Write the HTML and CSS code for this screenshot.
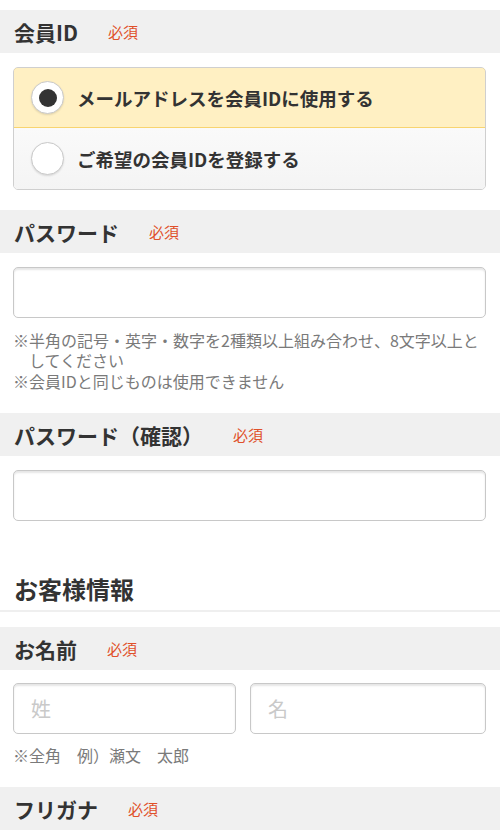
FILE: index.html
```html
<!DOCTYPE html>
<html lang="ja">
<head>
<meta charset="utf-8">
<title>会員登録</title>
<link rel="stylesheet" href="styles.css">
</head>
<body>
<div class="page">
  <div class="band"><span class="label">会員ID</span><span class="req">必須</span></div>
  <div class="body body-radio">
    <div class="radios">
      <label class="radio-row checked"><span class="radio"><span class="dot"></span></span><span class="rtext">メールアドレスを会員IDに使用する</span></label>
      <label class="radio-row"><span class="radio"></span><span class="rtext">ご希望の会員IDを登録する</span></label>
    </div>
  </div>

  <div class="band"><span class="label">パスワード</span><span class="req">必須</span></div>
  <div class="body body-pw">
    <div class="input"></div>
    <p class="note first">※半角の記号・英字・数字を2種類以上組み合わせ、8文字以上としてください</p>
    <p class="note">※会員IDと同じものは使用できません</p>
  </div>

  <div class="band"><span class="label">パスワード（確認）</span><span class="req">必須</span></div>
  <div class="body">
    <div class="input"></div>
  </div>

  <h2 class="section">お客様情報</h2>

  <div class="band"><span class="label">お名前</span><span class="req">必須</span></div>
  <div class="body body-name">
    <div class="name-row">
      <div class="input"><span class="ph">姓</span></div>
      <div class="input"><span class="ph">名</span></div>
    </div>
    <p class="note first">※全角　例）瀬文　太郎</p>
  </div>

  <div class="band"><span class="label">フリガナ</span><span class="req">必須</span></div>
</div>
</body>
</html>
```
FILE: styles.css
```css
* { box-sizing: border-box; }
html, body { margin: 0; padding: 0; background: #fff; }
body {
  font-family: "Noto Sans CJK JP", "Noto Sans", sans-serif;
  color: #333;
}
.page { padding-top: 10px; }
.band {
  height: 43px;
  background: #f0f0f0;
  display: flex;
  align-items: center;
  padding-left: 14px;
}
.label {
  font-size: 21px;
  font-weight: 700;
  color: #333;
}
.req {
  margin-left: 30px;
  font-size: 15px;
  color: #e0502a;
}
.body { padding: 14px 14px 0 13px; }
.body-radio { padding-bottom: 20px; }
.radios {
  border: 1px solid #cfcfcf;
  border-radius: 5px;
  overflow: hidden;
}
.radio-row {
  display: flex;
  align-items: center;
  height: 61px;
  padding-left: 17px;
  background: linear-gradient(#fafafa, #f4f4f4);
}
.radio-row.checked {
  background: #fff0c3;
  border: 1px solid #f8d470;
  margin: -1px -1px 0 -1px;
  height: 61px;
  border-radius: 5px 5px 0 0;
  padding-left: 17px;
}
.radio {
  width: 33px;
  height: 33px;
  border-radius: 50%;
  background: #fff;
  border: 1px solid #c9c9c9;
  box-shadow: 0 1px 2px rgba(0,0,0,0.12);
  display: flex;
  align-items: center;
  justify-content: center;
  flex: none;
}
.dot {
  width: 18px;
  height: 18px;
  border-radius: 50%;
  background: #333;
}
.rtext {
  margin-left: 13px;
  font-size: 18.5px;
  font-weight: 700;
  color: #333;
}
.input {
  height: 51px;
  border: 1px solid #c8c8c8;
  border-radius: 5px;
  background: #fff;
  box-shadow: inset 0 2px 2px rgba(0,0,0,0.1);
  display: flex;
  align-items: center;
  padding-left: 17px;
}
.ph {
  font-size: 20px;
  color: #c9c9c9;
}
.note {
  margin: 0;
  font-size: 16px;
  line-height: 20px;
  color: #7a7a7a;
  padding-left: 1em;
  text-indent: -1em;
}
.note.first { margin-top: 12px; }
.note + .note { margin-top: 1px; }
.body-pw { padding-bottom: 22px; }
.section {
  margin: 51px 0 15px;
  padding: 0 0 4px 14px;
  font-size: 24px;
  line-height: 34px;
  font-weight: 700;
  color: #333;
  border-bottom: 2px solid #efefef;
}
.name-row {
  display: grid;
  grid-template-columns: 223fr 236fr;
  gap: 14px;
}
.body-name { padding-top: 13px; padding-bottom: 22px; }
.body-name .note.first { margin-top: 11px; }
```
